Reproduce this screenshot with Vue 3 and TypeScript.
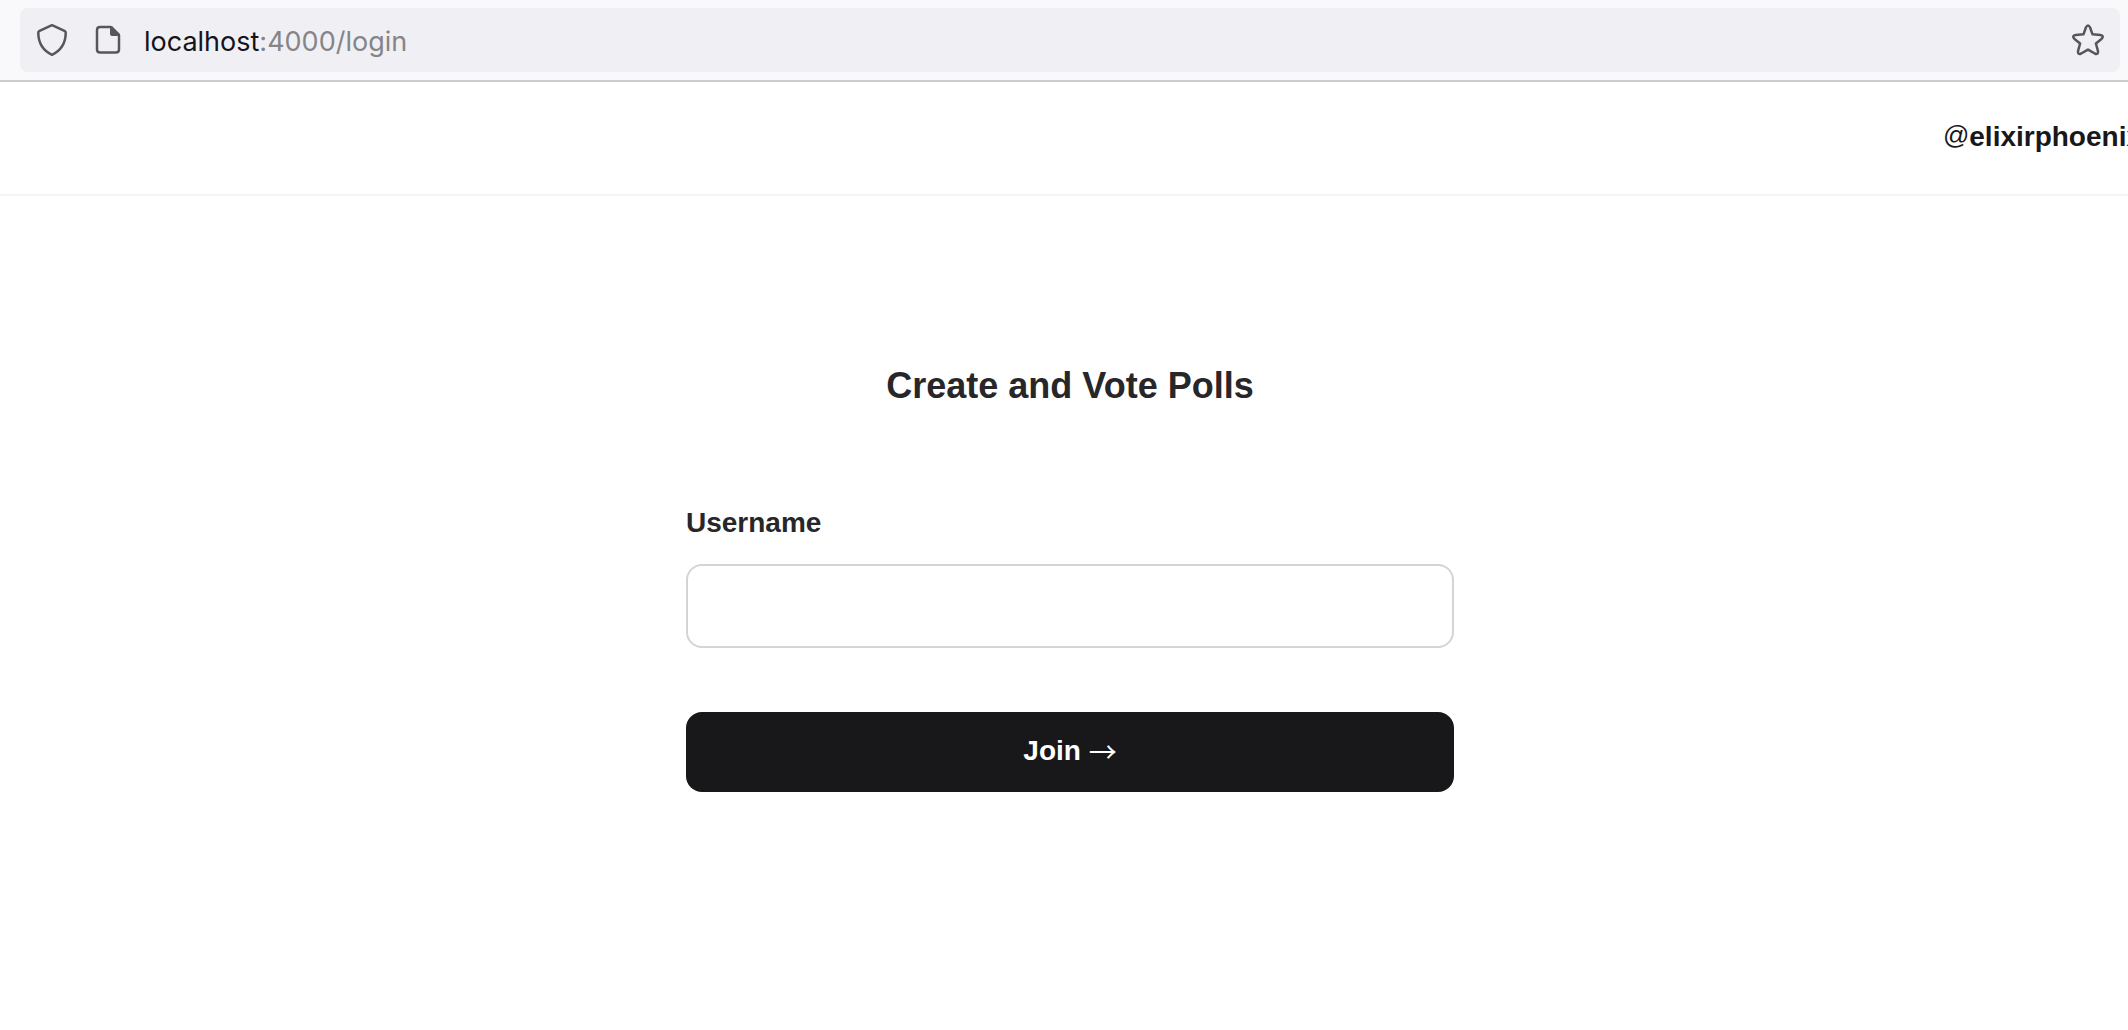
<script setup lang="ts">
import { ref } from 'vue'

const username = ref('')
const host = 'localhost'
const path = ':4000/login'
</script>

<template>
  <div class="browser">
    <div class="toolbar">
      <div class="urlbar">
        <svg class="icon" width="32" height="32" viewBox="0 0 32 32" aria-hidden="true">
          <path d="M16 1.2 29 7.2Q29.8 7.7 29.7 9C29.6 19 25 26.500 16 30.800 7 26.500 2.400 19 2.300 9Q2.200 7.700 3 7.200Z" />
        </svg>
        <svg class="icon" width="32" height="32" viewBox="0 0 32 32" aria-hidden="true">
          <path d="M19 3H8Q5 3 5 6V25.500Q5 28.500 8 28.500H24Q27 28.500 27 25.500V11" />
          <path class="solid" d="M18 2H20L28 10V12H20Q18 12 18 10Z" />
        </svg>
        <p class="address"><span class="host">{{ host }}</span>{{ path }}</p>
        <svg class="icon star" width="32" height="32" viewBox="0 0 32 32" aria-hidden="true">
          <path d="M13.900 3.500Q16 -0.500 18.100 3.500L20.500 10.300 28.300 10.900Q32.500 11.700 29.500 15L23.900 19.500 26 27.200Q26.300 31 22.800 29.500L16 25.600 9.200 29.500Q5.700 31 6 27.200L8.100 19.500 2.500 15Q-0.500 11.700 3.700 10.900L11.500 10.300Z" />
        </svg>
      </div>
    </div>
    <div class="page">
      <header class="header">
        <a class="handle" href="#"><span class="at">@</span>elixirphoenix</a>
      </header>
      <main class="content">
        <h1 class="title">Create and Vote Polls</h1>
        <form class="form" @submit.prevent>
          <label class="label" for="username">Username</label>
          <input id="username" v-model="username" class="input" type="text" name="username" />
          <button class="join" type="submit">Join <span class="arrow">→</span></button>
        </form>
      </main>
    </div>
  </div>
</template>

<style>
body {
  background: #fff;
}
</style>

<style scoped>
.browser {
  overflow: hidden;
  font-family: "Liberation Sans", Arial, sans-serif;
}

.toolbar {
  padding: 8px 8px 8px 20px;
  background: #f9f9fb;
  border-bottom: 2px solid #ccc;
}

.urlbar {
  display: flex;
  align-items: center;
  height: 64px;
  padding: 0 16px;
  box-sizing: border-box;
  gap: 24px;
  border-radius: 8px;
  background: #f0f0f4;
}

.icon {
  flex: none;
  fill: none;
  stroke: #56565b;
  stroke-width: 2.5;
  stroke-linejoin: round;
}

.icon .solid {
  fill: #56565b;
  stroke: none;
}

.address {
  flex: 1;
  margin: 0 0 0 -4px;
  padding-top: 4px;
  font-family: Inter, sans-serif;
  font-size: 27px;
  line-height: 32px;
  color: #858589;
}

.host {
  color: #15141a;
}

/* The page is slightly wider than the window, so its right edge is cut off */
.page {
  margin-right: -12px;
}

.header {
  display: flex;
  justify-content: flex-end;
  padding: 35px 0 37px;
  border-bottom: 2px solid #f4f4f5;
}

.handle {
  margin-right: -2px;
  font-size: 28px;
  line-height: 40px;
  font-weight: 700;
  color: #18181b;
  text-decoration: none;
}

.at {
  font-size: 26px;
  font-weight: 400;
  line-height: 1;
  vertical-align: 2px;
}

.content {
  width: 768px;
  max-width: 100%;
  margin: 0 auto;
  padding: 166px 0 64px;
}

.title {
  margin: 0;
  font-size: 36px;
  line-height: 48px;
  text-align: center;
  color: #27272a;
}

.form {
  display: flex;
  flex-direction: column;
  margin-top: 89px;
}

.label {
  font-size: 28px;
  line-height: 48px;
  font-weight: 700;
  color: #27272a;
}

.input {
  height: 84px;
  margin: 17px 0 64px;
  padding: 0 24px;
  box-sizing: border-box;
  border: 2px solid #d4d4d8;
  border-radius: 16px;
  font: inherit;
  font-size: 28px;
  background: #fff;
}

.join {
  height: 80px;
  padding: 0 24px 2px;
  border: 0;
  border-radius: 16px;
  background: #18181b;
  color: #fff;
  font: inherit;
  font-size: 28px;
  line-height: 48px;
  font-weight: 700;
}

.arrow {
  font-family: "Noto Sans CJK JP", sans-serif;
  font-weight: 400;
  line-height: 1;
  vertical-align: -3px;
}
</style>
